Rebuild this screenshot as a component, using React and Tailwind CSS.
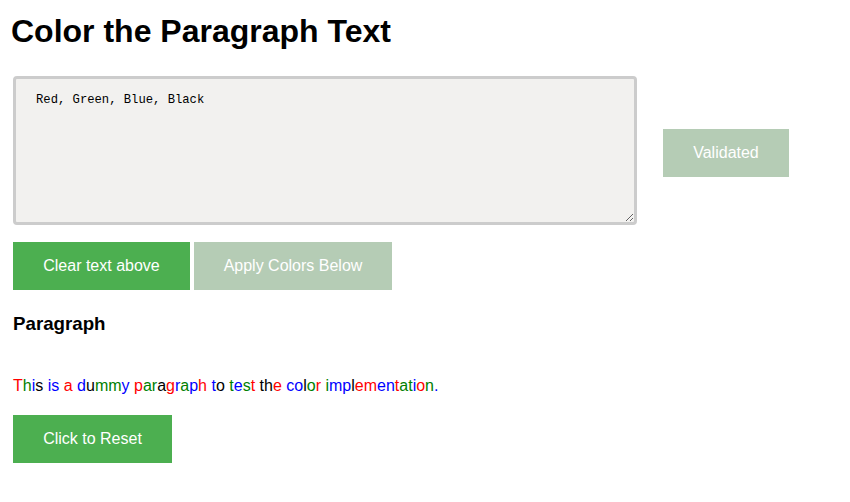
import React from "react";

const COLORS = { r: "text-[#ff0000]", g: "text-[#008000]", b: "text-[#0000ff]", k: "text-black" };

const WORDS = [
    ["This", "rgbk"],
    ["is", "bb"],
    ["a", "r"],
    ["dummy", "bkggb"],
    ["paragraph", "rggkrbgbr"],
    ["to", "bk"],
    ["test", "gbgr"],
    ["the", "kkr"],
    ["color", "bbkgr"],
    ["implementation.", "gbbkrrbbrggbrgb"],
];

function ColoredParagraph() {
    return (
        <p className="text-[16px] leading-[18px]">
            {WORDS.map(([word, colors], wi) => (
                <React.Fragment key={wi}>
                    {word.split("").map((ch, ci) => (
                        <span key={ci} className={COLORS[colors[ci]]}>{ch}</span>
                    ))}
                    {wi < WORDS.length - 1 && " "}
                </React.Fragment>
            ))}
        </p>
    );
}

export default function App() {
    return (
        <div className="bg-white min-h-screen pl-[13px] pt-[13px] text-black" style={{ fontFamily: '"Liberation Sans", Arial, sans-serif' }}>
            <h1 className="text-[32px] leading-[37px] font-bold -ml-[2px]">Color the Paragraph Text</h1>

            <div className="flex items-center mt-[26px]">
                <textarea
                    className="w-[624px] h-[149px] border-[3px] border-[#cccccc] rounded-[4px] bg-[#f2f1ef] pl-[20px] pt-[13px] text-[12.2px] leading-[16px] text-black outline-none"
                    style={{ fontFamily: '"Liberation Mono", "DejaVu Sans Mono", monospace' }}
                    defaultValue="Red, Green, Blue, Black"
                />
                <button className="ml-[26px] mt-[5px] w-[126px] h-[48px] bg-[#b5ccb5] text-white text-[16px]">Validated</button>
            </div>

            <div className="flex gap-[4px] mt-[17px]">
                <button className="w-[177px] h-[48px] bg-[#4caf50] text-white text-[16px]">Clear text above</button>
                <button className="w-[198px] h-[48px] bg-[#b5ccb5] text-white text-[16px]">Apply Colors Below</button>
            </div>

            <h3 className="mt-[23px] text-[18.72px] leading-[22px] font-bold">Paragraph</h3>

            <div className="mt-[42px]">
                <ColoredParagraph />
            </div>

            <button className="mt-[20px] w-[159px] h-[48px] bg-[#4caf50] text-white text-[16px]">Click to Reset</button>
        </div>
    );
}
